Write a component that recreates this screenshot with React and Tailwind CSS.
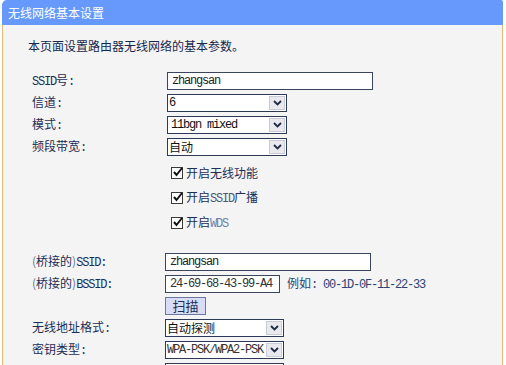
import React from "react";

const CJK = { fontFamily: '"Noto Sans CJK SC", "Liberation Sans", sans-serif' };
const MONO = { fontFamily: '"Liberation Mono", "Noto Sans CJK SC", monospace' };

function Mono({ children, className = "" }) {
  return (
    <span className={"text-[12px] tracking-[-1.2px] " + className} style={MONO}>
      {children}
    </span>
  );
}

function Chevron() {
  return (
    <svg width="9" height="6" viewBox="0 0 9 6">
      <polyline points="1,1 4.5,4.5 8,1" fill="none" stroke="#1e2a44" strokeWidth="1.8" />
    </svg>
  );
}

function Select({ width, children }) {
  return (
    <div
      className="flex h-[18px] items-stretch border border-[#2c3a58] bg-white"
      style={{ width }}
    >
      <div className="flex flex-1 items-center whitespace-nowrap pl-[1px] leading-[16px] text-[#111]">
        {children}
      </div>
      <div className="m-[1px] flex w-[16px] items-center justify-center border border-[#c8ccd8] bg-[#e8e8ee]">
        <Chevron />
      </div>
    </div>
  );
}

function Input({ width, children }) {
  return (
    <div
      className="flex h-[18px] items-center border border-[#3a465e] bg-white pl-[4px] leading-[16px] text-[#222]"
      style={{ width }}
    >
      {children}
    </div>
  );
}

function Check({ children }) {
  return (
    <div className="flex h-[25px] items-center">
      <div className="relative ml-[4px] h-[12px] w-[12px] border border-[#3a3a3a] bg-white">
        <svg className="absolute left-[0px] top-[-2px]" width="12" height="12" viewBox="0 0 12 12">
          <polyline points="2,6 4.5,9 10,2" fill="none" stroke="#111" strokeWidth="2" />
        </svg>
      </div>
      <span className="ml-[3px] text-[12px] text-[#1c2e55]" style={CJK}>
        {children}
      </span>
    </div>
  );
}

function Row({ label, labelW, children }) {
  return (
    <div className="flex h-[22px] items-center">
      <div className="shrink-0 text-[12px] text-[#1c2e55]" style={{ ...CJK, width: labelW }}>
        {label}
      </div>
      {children}
    </div>
  );
}

export default function App() {
  return (
    <div className="h-[365px] w-[506px] overflow-hidden bg-white" style={CJK}>
      <div className="ml-[2px] w-[501px]">
        <div className="flex h-[25px] items-center rounded-tl-[5px] rounded-tr-[2px] bg-[#6699fb] pl-[6px] text-[12px] text-white">
          无线网络基本设置
        </div>
        <div className="h-[340px] border-l border-r border-[#e0b878] bg-[#f4f4f4]">
          <div className="pl-[25px] pt-[13px] text-[12px] leading-[16px] text-[#16284d]">
            本页面设置路由器无线网络的基本参数。
          </div>
          <div className="mt-[16px] pl-[29px]">
            <Row label={<><Mono>SSID</Mono>号<Mono>:</Mono></>} labelW={135}>
              <Input width={206}>
                <Mono className="text-[#222]">zhangsan</Mono>
              </Input>
            </Row>
            <Row label={<>信道<Mono>:</Mono></>} labelW={135}>
              <Select width={120}>
                <Mono>6</Mono>
              </Select>
            </Row>
            <Row label={<>模式<Mono>:</Mono></>} labelW={135}>
              <Select width={120}>
                <Mono className="pl-[2px]">11bgn mixed</Mono>
              </Select>
            </Row>
            <Row label={<>频段带宽<Mono>:</Mono></>} labelW={135}>
              <Select width={120}>
                <span className="text-[12px] leading-[16px]">自动</span>
              </Select>
            </Row>
            <div className="ml-[135px] mt-[2px]">
              <Check>开启无线功能</Check>
              <Check>
                开启<Mono className="text-[#4a5a7a]">SSID</Mono>广播
              </Check>
              <Check>
                开启<Mono className="text-[#7080a8]">WDS</Mono>
              </Check>
            </div>
            <div className="mt-[16px]">
              <Row
                label={<><span className="text-[#6a7690]">(</span>桥接的<span className="text-[#6a7690]">)</span><Mono>SSID:</Mono></>}
                labelW={133}
              >
                <Input width={206}>
                  <Mono className="text-[#222]">zhangsan</Mono>
                </Input>
              </Row>
              <Row
                label={<><span className="text-[#6a7690]">(</span>桥接的<span className="text-[#6a7690]">)</span><Mono>BSSID:</Mono></>}
                labelW={133}
              >
                <Input width={115}>
                  <Mono className="text-[#333]">24-69-68-43-99-A4</Mono>
                </Input>
                <span className="ml-[7px] text-[12px] text-[#2a4474]">
                  例如<Mono>: 00-1D-0F-11-22-33</Mono>
                </span>
              </Row>
              <Row label="" labelW={133}>
                <div className="flex h-[18px] w-[41px] items-center justify-center border border-[#6a78a0] bg-[#d8dcf6] text-[13px] leading-[16px] text-[#1c2e55]">
                  扫描
                </div>
              </Row>
              <Row label={<>无线地址格式<Mono>:</Mono></>} labelW={133}>
                <Select width={119}>
                  <span className="text-[12px] leading-[16px]">自动探测</span>
                </Select>
              </Row>
              <Row label={<>密钥类型<Mono>:</Mono></>} labelW={133}>
                <Select width={119}>
                  <Mono className="text-[#333]">WPA-PSK/WPA2-PSK</Mono>
                </Select>
              </Row>
              <Row label="" labelW={133}>
                <Select width={119}>
                  <span />
                </Select>
              </Row>
            </div>
          </div>
        </div>
      </div>
    </div>
  );
}
